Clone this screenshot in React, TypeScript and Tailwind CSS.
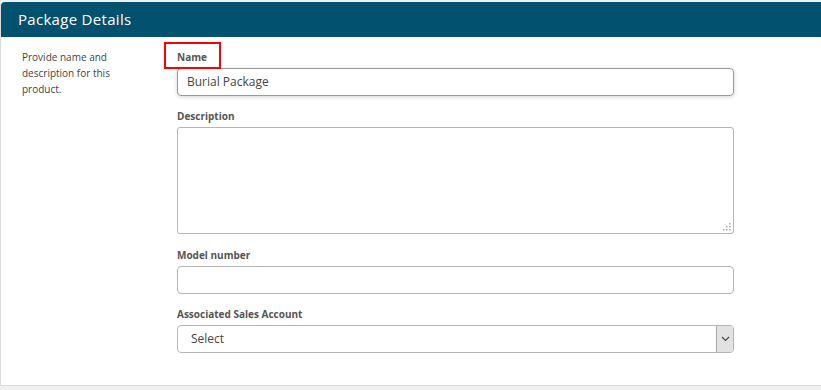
import React from "react";

function Label({ children, boxed }: { children: React.ReactNode; boxed?: boolean }) {
  return (
    <div className="relative h-[16px] mb-[3px] text-[10px] leading-[16px] font-bold text-[#555]">
      {children}
      {boxed && (
        <div className="absolute left-[-13px] top-[-7px] w-[57px] h-[27px] border-2 border-[#ff0000]" />
      )}
    </div>
  );
}

export default function App() {
  return (
    <div
      className="w-[821px] h-[390px] bg-[#f0f0f0] pt-[2px] overflow-hidden"
      style={{ fontFamily: '"Open Sans", "Liberation Sans", sans-serif' }}
    >
      <div className="h-[384px] bg-white border-l border-b border-[#dcdcdc] rounded-tl-[4px]">
        <div className="h-[35px] bg-[#02516f] rounded-tl-[4px] flex items-center pl-[17px] text-white text-[15px] tracking-[0.3px]">
          Package Details
        </div>
        <div className="flex">
          <div className="w-[176px] pl-[21px] pt-[12px]">
            <p className="w-[120px] text-[10px] leading-[16px] text-[#444]">
              Provide name and description for this product.
            </p>
          </div>
          <div className="w-[557px] pt-[12px]">
            <Label boxed>Name</Label>
            <div className="h-[28px] rounded-[4px] border border-[#999] shadow-[0_1px_4px_rgba(0,0,0,0.18)] flex items-center pl-[9px] text-[12px] text-[#444]">
              Burial Package
            </div>
            <div className="mt-[12px]">
              <Label>Description</Label>
              <div className="relative h-[107px] rounded-[3px] border border-[#b5b5b5]">
                <svg className="absolute right-[2px] bottom-[2px]" width="8" height="8" viewBox="0 0 8 8">
                  <rect x="6" y="0" width="1.5" height="1.5" fill="#aaa" />
                  <rect x="3" y="3" width="1.5" height="1.5" fill="#aaa" />
                  <rect x="6" y="3" width="1.5" height="1.5" fill="#aaa" />
                  <rect x="0" y="6" width="1.5" height="1.5" fill="#aaa" />
                  <rect x="3" y="6" width="1.5" height="1.5" fill="#aaa" />
                  <rect x="6" y="6" width="1.5" height="1.5" fill="#aaa" />
                </svg>
              </div>
            </div>
            <div className="mt-[13px]">
              <Label>Model number</Label>
              <div className="h-[28px] rounded-[4px] border border-[#b5b5b5]" />
            </div>
            <div className="mt-[12px]">
              <Label>Associated Sales Account</Label>
              <div className="h-[28px] rounded-[4px] border border-[#b5b5b5] flex overflow-hidden">
                <div className="flex-1 flex items-center pl-[13px] text-[12px] text-[#444]">Select</div>
                <div className="w-[17px] bg-[#e2e2e2] border-l border-[#a8a8a8] flex items-center justify-center">
                  <svg width="9" height="6" viewBox="0 0 9 6">
                    <path d="M1 1 L4.5 4.5 L8 1" fill="none" stroke="#444" strokeWidth="1.1" />
                  </svg>
                </div>
              </div>
            </div>
          </div>
        </div>
      </div>
    </div>
  );
}
